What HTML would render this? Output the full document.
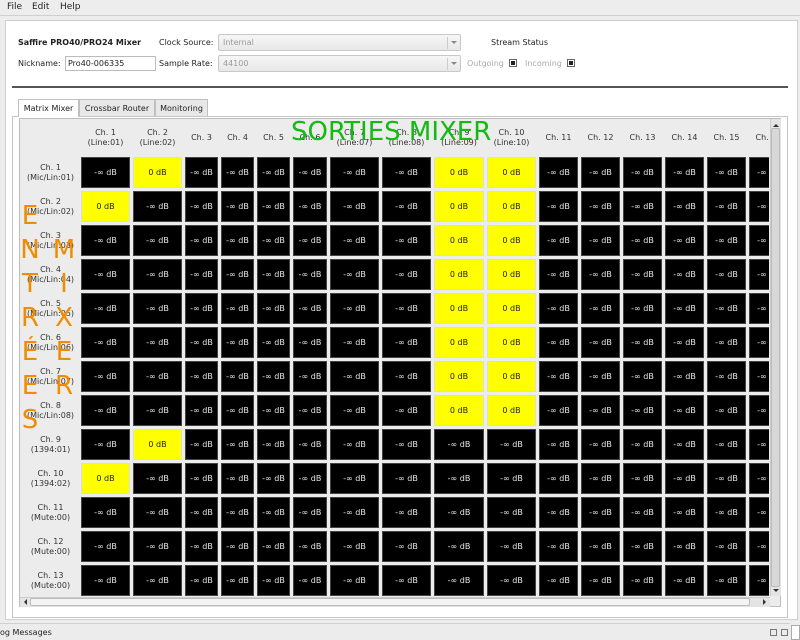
<!DOCTYPE html>
<html><head><meta charset="utf-8"><style>
*{box-sizing:border-box;margin:0;padding:0}
body{width:800px;height:640px;overflow:hidden;background:#ededed;font-family:"DejaVu Sans","Liberation Sans",sans-serif;font-size:8px;color:#222;position:relative}
.a{position:absolute}
.menu{top:0;left:0;width:800px;height:16px;background:#ededed;border-bottom:1px solid #d0d0d0}
.menu span{position:absolute;top:2px;font-size:9px}
.pane{left:5px;top:20px;width:793px;height:600px;background:#fff;border:1px solid #cfcfcf}
.combo{height:17px;border:1px solid #c8c8c8;border-radius:2px;background:linear-gradient(#f6f6f6,#e8e8e8);color:#999;font-size:8px;padding:3px 4px}
.combo:after{content:"";position:absolute;right:0;top:2px;width:12px;height:12px;border-left:1px solid #ccc}
.arr{position:absolute;right:3px;top:6px;border:3px solid transparent;border-top:3px solid #888}
.cb{width:8px;height:8px;border:1px solid #666;background:#fff;position:absolute}
.cb:after{content:"";position:absolute;left:1px;top:1px;width:4px;height:4px;background:#222}
.tab{top:99px;height:17px;border:1px solid #c0c0c0;border-bottom:none;background:#e8e8e8;font-size:8px;padding:4px 0;text-align:center}
.frame{left:12px;top:116px;width:776px;height:502px;background:#fff;border:1px solid #c6c6c6}
.scroll{left:19px;top:118px;width:762px;height:489px;border:1px solid #bdbdbd;background:#ececec}
.clip{left:20px;top:119px;width:749px;height:477px;overflow:hidden}
table{border-spacing:3px;border-collapse:separate;table-layout:fixed;position:absolute;left:0;top:0;width:771px}
td{height:31px;text-align:center;vertical-align:middle;font-size:8px;color:#e8e8e8;background:#000;border:1px solid #444;white-space:nowrap;overflow:hidden}
td.y{background:#ffff00;color:#222;border-color:#ddd}
th{height:32px;font-weight:normal;font-size:8px;color:#333;line-height:10px;text-align:center;vertical-align:middle;white-space:nowrap;overflow:hidden}
td.l{background:transparent;border:none;color:#333;font-size:8px;line-height:10px;overflow:visible}
.big{font-family:"DejaVu Sans","Liberation Sans",sans-serif;font-size:26px;line-height:26px;font-weight:normal}
</style></head><body>
<div class="a menu"><span style="left:7px">File</span><span style="left:32px">Edit</span><span style="left:60px">Help</span></div>
<div class="a pane"></div>
<div class="a" style="left:18px;top:38px;font-weight:bold">Saffire PRO40/PRO24 Mixer</div>
<div class="a" style="left:18px;top:59px">Nickname:</div>
<div class="a" style="left:65px;top:56px;width:91px;height:15px;border:1px solid #bbb;padding:2px 2px">Pro40-006335</div>
<div class="a" style="left:159px;top:38px">Clock Source:</div>
<div class="a" style="left:159px;top:59px">Sample Rate:</div>
<div class="a combo" style="left:218px;top:34px;width:243px">Internal<i class="arr"></i></div>
<div class="a combo" style="left:218px;top:55px;width:243px">44100<i class="arr"></i></div>
<div class="a" style="left:491px;top:38px">Stream Status</div>
<div class="a" style="left:467px;top:59px;color:#aaa">Outgoing</div><span class="cb" style="left:509px;top:59px"></span>
<div class="a" style="left:525px;top:59px;color:#aaa">Incoming</div><span class="cb" style="left:567px;top:59px"></span>
<div class="a" style="left:12px;top:86px;width:776px;height:2px;background:#555"></div>
<div class="a frame"></div>
<div class="a tab" style="left:18px;top:99px;height:18px;width:61px;background:#fff;z-index:2">Matrix Mixer</div>
<div class="a tab" style="left:79px;width:76px">Crossbar Router</div>
<div class="a tab" style="left:155px;width:53px">Monitoring</div>
<div class="a scroll"></div>
<div class="a clip"><table>
<colgroup><col style="width:55px"><col style="width:49px"><col style="width:49px"><col style="width:33px"><col style="width:33px"><col style="width:33px"><col style="width:34px"><col style="width:49px"><col style="width:49px"><col style="width:50px"><col style="width:49px"><col style="width:39px"><col style="width:39px"><col style="width:39px"><col style="width:39px"><col style="width:39px"><col style="width:39px"></colgroup>
<tr><th></th><th>Ch. 1<br>(Line:01)</th><th>Ch. 2<br>(Line:02)</th><th>Ch. 3</th><th>Ch. 4</th><th>Ch. 5</th><th>Ch. 6</th><th>Ch. 7<br>(Line:07)</th><th>Ch. 8<br>(Line:08)</th><th>Ch. 9<br>(Line:09)</th><th>Ch. 10<br>(Line:10)</th><th>Ch. 11</th><th>Ch. 12</th><th>Ch. 13</th><th>Ch. 14</th><th>Ch. 15</th><th>Ch. 16</th></tr>
<tr><td class="l">Ch. 1<br>(Mic/Lin:01)</td><td>-∞ dB</td><td class="y">0 dB</td><td>-∞ dB</td><td>-∞ dB</td><td>-∞ dB</td><td>-∞ dB</td><td>-∞ dB</td><td>-∞ dB</td><td class="y">0 dB</td><td class="y">0 dB</td><td>-∞ dB</td><td>-∞ dB</td><td>-∞ dB</td><td>-∞ dB</td><td>-∞ dB</td><td>-∞ dB</td></tr>
<tr><td class="l">Ch. 2<br>(Mic/Lin:02)</td><td class="y">0 dB</td><td>-∞ dB</td><td>-∞ dB</td><td>-∞ dB</td><td>-∞ dB</td><td>-∞ dB</td><td>-∞ dB</td><td>-∞ dB</td><td class="y">0 dB</td><td class="y">0 dB</td><td>-∞ dB</td><td>-∞ dB</td><td>-∞ dB</td><td>-∞ dB</td><td>-∞ dB</td><td>-∞ dB</td></tr>
<tr><td class="l">Ch. 3<br>(Mic/Lin:03)</td><td>-∞ dB</td><td>-∞ dB</td><td>-∞ dB</td><td>-∞ dB</td><td>-∞ dB</td><td>-∞ dB</td><td>-∞ dB</td><td>-∞ dB</td><td class="y">0 dB</td><td class="y">0 dB</td><td>-∞ dB</td><td>-∞ dB</td><td>-∞ dB</td><td>-∞ dB</td><td>-∞ dB</td><td>-∞ dB</td></tr>
<tr><td class="l">Ch. 4<br>(Mic/Lin:04)</td><td>-∞ dB</td><td>-∞ dB</td><td>-∞ dB</td><td>-∞ dB</td><td>-∞ dB</td><td>-∞ dB</td><td>-∞ dB</td><td>-∞ dB</td><td class="y">0 dB</td><td class="y">0 dB</td><td>-∞ dB</td><td>-∞ dB</td><td>-∞ dB</td><td>-∞ dB</td><td>-∞ dB</td><td>-∞ dB</td></tr>
<tr><td class="l">Ch. 5<br>(Mic/Lin:05)</td><td>-∞ dB</td><td>-∞ dB</td><td>-∞ dB</td><td>-∞ dB</td><td>-∞ dB</td><td>-∞ dB</td><td>-∞ dB</td><td>-∞ dB</td><td class="y">0 dB</td><td class="y">0 dB</td><td>-∞ dB</td><td>-∞ dB</td><td>-∞ dB</td><td>-∞ dB</td><td>-∞ dB</td><td>-∞ dB</td></tr>
<tr><td class="l">Ch. 6<br>(Mic/Lin:06)</td><td>-∞ dB</td><td>-∞ dB</td><td>-∞ dB</td><td>-∞ dB</td><td>-∞ dB</td><td>-∞ dB</td><td>-∞ dB</td><td>-∞ dB</td><td class="y">0 dB</td><td class="y">0 dB</td><td>-∞ dB</td><td>-∞ dB</td><td>-∞ dB</td><td>-∞ dB</td><td>-∞ dB</td><td>-∞ dB</td></tr>
<tr><td class="l">Ch. 7<br>(Mic/Lin:07)</td><td>-∞ dB</td><td>-∞ dB</td><td>-∞ dB</td><td>-∞ dB</td><td>-∞ dB</td><td>-∞ dB</td><td>-∞ dB</td><td>-∞ dB</td><td class="y">0 dB</td><td class="y">0 dB</td><td>-∞ dB</td><td>-∞ dB</td><td>-∞ dB</td><td>-∞ dB</td><td>-∞ dB</td><td>-∞ dB</td></tr>
<tr><td class="l">Ch. 8<br>(Mic/Lin:08)</td><td>-∞ dB</td><td>-∞ dB</td><td>-∞ dB</td><td>-∞ dB</td><td>-∞ dB</td><td>-∞ dB</td><td>-∞ dB</td><td>-∞ dB</td><td class="y">0 dB</td><td class="y">0 dB</td><td>-∞ dB</td><td>-∞ dB</td><td>-∞ dB</td><td>-∞ dB</td><td>-∞ dB</td><td>-∞ dB</td></tr>
<tr><td class="l">Ch. 9<br>(1394:01)</td><td>-∞ dB</td><td class="y">0 dB</td><td>-∞ dB</td><td>-∞ dB</td><td>-∞ dB</td><td>-∞ dB</td><td>-∞ dB</td><td>-∞ dB</td><td>-∞ dB</td><td>-∞ dB</td><td>-∞ dB</td><td>-∞ dB</td><td>-∞ dB</td><td>-∞ dB</td><td>-∞ dB</td><td>-∞ dB</td></tr>
<tr><td class="l">Ch. 10<br>(1394:02)</td><td class="y">0 dB</td><td>-∞ dB</td><td>-∞ dB</td><td>-∞ dB</td><td>-∞ dB</td><td>-∞ dB</td><td>-∞ dB</td><td>-∞ dB</td><td>-∞ dB</td><td>-∞ dB</td><td>-∞ dB</td><td>-∞ dB</td><td>-∞ dB</td><td>-∞ dB</td><td>-∞ dB</td><td>-∞ dB</td></tr>
<tr><td class="l">Ch. 11<br>(Mute:00)</td><td>-∞ dB</td><td>-∞ dB</td><td>-∞ dB</td><td>-∞ dB</td><td>-∞ dB</td><td>-∞ dB</td><td>-∞ dB</td><td>-∞ dB</td><td>-∞ dB</td><td>-∞ dB</td><td>-∞ dB</td><td>-∞ dB</td><td>-∞ dB</td><td>-∞ dB</td><td>-∞ dB</td><td>-∞ dB</td></tr>
<tr><td class="l">Ch. 12<br>(Mute:00)</td><td>-∞ dB</td><td>-∞ dB</td><td>-∞ dB</td><td>-∞ dB</td><td>-∞ dB</td><td>-∞ dB</td><td>-∞ dB</td><td>-∞ dB</td><td>-∞ dB</td><td>-∞ dB</td><td>-∞ dB</td><td>-∞ dB</td><td>-∞ dB</td><td>-∞ dB</td><td>-∞ dB</td><td>-∞ dB</td></tr>
<tr><td class="l">Ch. 13<br>(Mute:00)</td><td>-∞ dB</td><td>-∞ dB</td><td>-∞ dB</td><td>-∞ dB</td><td>-∞ dB</td><td>-∞ dB</td><td>-∞ dB</td><td>-∞ dB</td><td>-∞ dB</td><td>-∞ dB</td><td>-∞ dB</td><td>-∞ dB</td><td>-∞ dB</td><td>-∞ dB</td><td>-∞ dB</td><td>-∞ dB</td></tr>
</table></div>
<div class="a" style="left:770px;top:119px;width:11px;height:477px;background:#e4e4e4;border-left:1px solid #ccc"></div>
<div class="a" style="left:771px;top:128px;width:9px;height:459px;background:#d8d8d8;border:1px solid #bbb;border-radius:2px"></div>
<div class="a" style="left:773px;top:121px;border:3px solid transparent;border-bottom:3px solid #333;width:0;height:0"></div>
<div class="a" style="left:773px;top:589px;border:3px solid transparent;border-top:3px solid #333;width:0;height:0"></div>
<div class="a" style="left:20px;top:597px;width:750px;height:10px;background:#e4e4e4;border-top:1px solid #ccc"></div>
<div class="a" style="left:30px;top:598px;width:720px;height:8px;background:#f4f4f4;border:1px solid #bbb;border-radius:2px"></div>
<div class="a" style="left:21px;top:599px;border:3px solid transparent;border-right:3px solid #333;width:0;height:0"></div>
<div class="a" style="left:763px;top:599px;border:3px solid transparent;border-left:3px solid #333;width:0;height:0"></div>
<div class="a big" style="left:291px;top:119px;color:#11bb11;white-space:nowrap">SORTIES MIXER</div>
<div class="a big" style="left:19px;top:199px;color:#f08c00;line-height:34px;width:22px;text-align:center">E<br>N<br>T<br>R<br>É<br>E<br>S</div>
<div class="a big" style="left:52px;top:233px;color:#f08c00;line-height:34px;width:24px;text-align:center">M<br>I<br>X<br>E<br>R</div>
<div class="a" style="left:0;top:623px;width:790px;height:17px;background:#ececec;border-top:1px solid #d0d0d0"></div>
<div class="a" style="left:0;top:628px">og Messages</div>
<div class="a" style="left:770px;top:629px;width:7px;height:7px;border:1px solid #777"></div>
<div class="a" style="left:781px;top:629px;width:7px;height:7px;border:1px solid #777"></div>
<div class="a" style="left:791px;top:625px;width:9px;height:15px;border:1px solid #aaa;background:#fff"></div>
</body></html>
